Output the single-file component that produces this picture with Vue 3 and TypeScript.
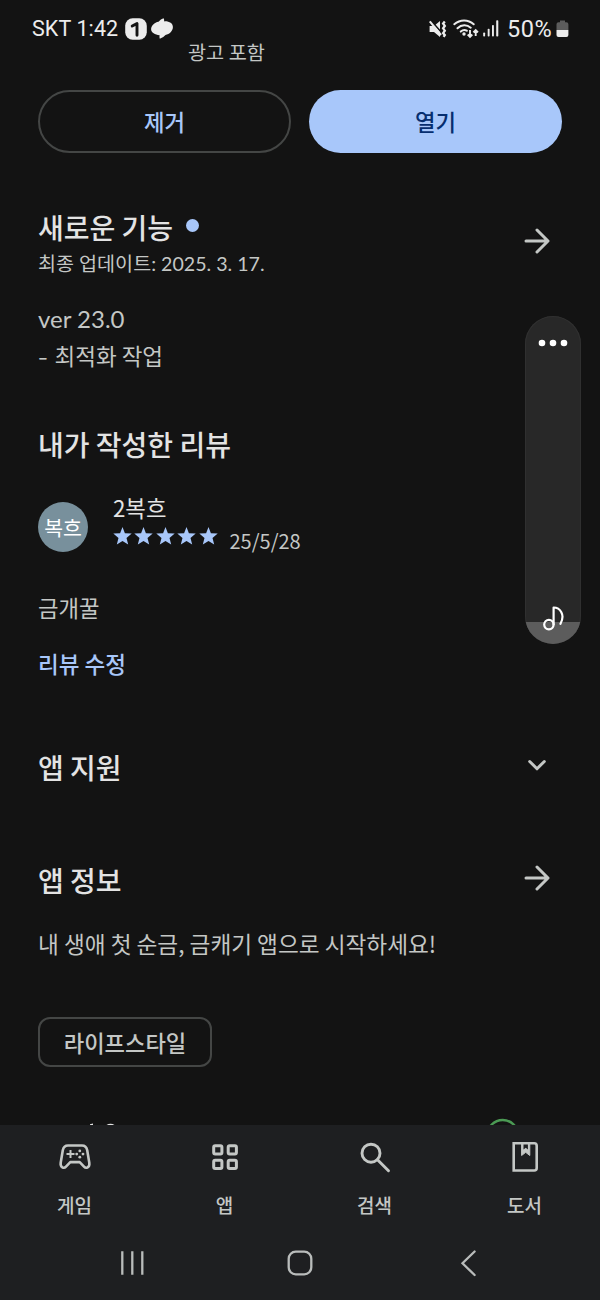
<script setup lang="ts">
const tabs: { id: string; label: string }[] = [
  { id: 'games', label: '게임' },
  { id: 'apps', label: '앱' },
  { id: 'search', label: '검색' },
  { id: 'books', label: '도서' },
]
const stars: number[] = [1, 2, 3, 4, 5]
</script>

<template>
  <div class="phone">
    <header class="status">
      <span class="carrier">SKT 1:42</span>
      <svg class="badge" width="22" height="22" viewBox="0 0 22 22">
        <rect x="0.2" y="0.2" width="21.6" height="21.6" rx="7.5" fill="#ececec" />
        <path d="M7.200 8 L12 5.600 V17.200" fill="none" stroke="#131313" stroke-width="2.900" stroke-linejoin="round" stroke-linecap="round" />
      </svg>
      <svg class="swirl" width="22" height="21" viewBox="0 0 22 21">
        <path d="M12.500 .2 C13.300 1.300 13.300 2.400 13 3.400 C18 3 21.900 5.300 21.900 9 C21.900 13 18.500 16.200 14.500 17 Q12 20 8.800 20.700 Q8.200 18.800 8.600 17.200 C4 16.900 .1 14.700 .1 11.300 C.1 7.500 3.500 4.400 7.500 3.700 Q9.800 .9 12.500 .2Z" fill="#ececec" />
      </svg>
      <span class="spacer"></span>
      <svg class="mute" width="18" height="18" viewBox="0 0 18 18">
        <path d="M.6 6h4.400l6-5v16l-6-5H.6z" fill="#ececec" />
        <path d="M1.800 .4 L13 13" stroke="#131313" stroke-width="1.700" />
        <path d="M.8 1.400 L12 15" stroke="#ececec" stroke-width="2" />
        <path d="M15.800 1.500l-1.700 2 1.700 2.400-1.700 2.400 1.700 2.400-1.700 2.400 1.700 2-1.200 1.800" fill="none" stroke="#ececec" stroke-width="2.300" />
      </svg>
      <svg class="wifi" width="26" height="20" viewBox="0 0 26 20" fill="none" stroke="#ececec">
        <path d="M1.300 5.200 C7 .1 15.200 .1 20.700 5.200 M4.500 9.200 C8.500 5.400 14 5.400 17.700 8.700 M7.800 12.600 C9.800 10.800 12 10.700 13.800 11.700" stroke-width="2" stroke-linecap="round" />
        <circle cx="11" cy="15" r="1.700" fill="#ececec" stroke="none" />
        <path d="M17 11v7M14.700 15.500l2.300 2.300 2.300-2.300M22.700 17v-6M20.400 13.300l2.300-2.300 2.300 2.300" stroke-width="1.900" />
      </svg>
      <svg class="signal" width="16" height="17" viewBox="0 0 16 17" fill="#ececec">
        <rect x="0.2" y="12.500" width="1.900" height="4" rx=".8" />
        <rect x="4.700" y="8.700" width="1.900" height="7.800" rx=".8" />
        <rect x="9" y="5" width="1.900" height="11.500" rx=".8" />
        <rect x="13.200" y="0.300" width="2.100" height="16.200" rx=".8" />
      </svg>
      <span class="percent">50%</span>
      <svg class="battery" width="13" height="18" viewBox="0 0 13 18">
        <path d="M4 .5h5v1.700h1.400a2 2 0 0 1 2 2V10H.5V4.200a2 2 0 0 1 2-2H4z" fill="#5c5c5c" />
        <path d="M.5 10h11.900v5.100a2 2 0 0 1-2 2H2.500a2 2 0 0 1-2-2z" fill="#ececec" />
      </svg>
    </header>

    <main class="content">
      <p class="ads">광고 포함</p>
      <div class="buttons">
        <button class="btn outline"><span>제거</span></button>
        <button class="btn filled"><span>열기</span></button>
      </div>

      <section class="news">
        <div class="row">
          <div>
            <h2 class="with-dot">새로운 기능<i class="dot"></i></h2>
            <p class="updated">최종 업데이트: 2025. 3. 17.</p>
          </div>
          <svg class="arrow" width="26" height="26" viewBox="0 0 26 26"><path d="M2 13H23.500M13 2l11 11-11 11" /></svg>
        </div>
        <p class="version">ver 23.0</p>
        <p class="body notes"><span class="dash">-</span>최적화 작업</p>
      </section>

      <section class="review">
        <h2>내가 작성한 리뷰</h2>
        <div class="reviewer">
          <div class="avatar"><span>복흐</span></div>
          <div>
            <p class="name">2복흐</p>
            <div class="rating">
              <svg v-for="s in stars" :key="s" width="19" height="18" viewBox="0 0 19 18">
                <path d="M9.500 .1 L11.900 6.200 L18.700 6.600 L13.500 11 L15.200 17.600 L9.500 14 L3.800 17.600 L5.500 11 L.3 6.600 L7.100 6.200Z" fill="#a8c7fa" />
              </svg>
              <span class="date">25/5/28</span>
            </div>
          </div>
        </div>
        <p class="body comment">금개꿀</p>
        <a class="edit">리뷰 수정</a>
      </section>

      <section class="row support">
        <h2>앱 지원</h2>
        <svg class="arrow" width="26" height="26" viewBox="0 0 26 26"><path d="M5.700 9.500l7.300 7.300 7.300-7.300" /></svg>
      </section>

      <section class="row about">
        <h2>앱 정보</h2>
        <svg class="arrow" width="26" height="26" viewBox="0 0 26 26"><path d="M2 13H23.500M13 2l11 11-11 11" /></svg>
      </section>
      <p class="body summary">내 생애 첫 순금, 금캐기 앱으로 시작하세요!</p>
      <span class="chip">라이프스타일</span>

      <div class="peek">
        <svg width="524" height="7" viewBox="0 0 524 7">
          <path d="M52 7v-.7l3-.8v1.500zM68.500 7q4-2.600 8 0z" fill="#e3e3e3" />
          <circle cx="464.700" cy="17.500" r="15.500" fill="none" stroke="#4b9a54" stroke-width="2.400" />
        </svg>
      </div>
    </main>

    <footer class="bottom">
      <nav class="tabs">
        <div v-for="t in tabs" :key="t.id" class="tab">
          <svg v-if="t.id === 'games'" width="36" height="36" viewBox="0 0 36 36" fill="none" stroke="#c4c7c5">
            <path d="M11 6.500H25C28 6.500 29.600 8.300 30.200 11.300L32.300 23.800C33 28.600 29 29.800 27 27.600L22.700 23.100H13.300L9 27.600C7 29.800 3 28.600 3.700 23.800L5.800 11.300C6.400 8.300 8 6.500 11 6.500Z" stroke-width="2.600" stroke-linejoin="round" />
            <path d="M13.500 11v8M9.500 15h8" stroke-width="2" />
            <g fill="#c4c7c5" stroke="none"><circle cx="22.800" cy="11.900" r="1.400" /><circle cx="22.800" cy="18.200" r="1.400" /><circle cx="19.700" cy="15.100" r="1.400" /><circle cx="26" cy="15.100" r="1.400" /></g>
          </svg>
          <svg v-else-if="t.id === 'apps'" width="36" height="36" viewBox="0 0 36 36" fill="none" stroke="#c4c7c5" stroke-width="3">
            <rect x="6.700" y="6.700" width="8.200" height="8.200" rx="1.500" /><rect x="21.200" y="6.700" width="8.200" height="8.200" rx="1.500" />
            <rect x="6.700" y="21.200" width="8.200" height="8.200" rx="1.500" /><rect x="21.200" y="21.200" width="8.200" height="8.200" rx="1.500" />
          </svg>
          <svg v-else-if="t.id === 'search'" width="36" height="36" viewBox="0 0 36 36" fill="none" stroke="#c4c7c5" stroke-width="2.900">
            <circle cx="14" cy="14.200" r="9" /><path d="M20.500 20.700L31.500 31.800" stroke-linecap="round" />
          </svg>
          <svg v-else width="36" height="36" viewBox="0 0 36 36" fill="none" stroke="#c4c7c5" stroke-width="2.600">
            <path d="M6.700 4.200H27.200Q29.700 4.200 29.700 6.700V29Q29.700 31.500 27.200 31.500H6.700Z" />
            <path d="M14.600 4V16.500L18.700 13.300L22.800 16.500V4" fill="#c4c7c5" stroke-width="1" />
            <path d="M16.500 5.500h4.400v5l-2.200-1.800-2.200 1.800z" fill="#1e1f21" stroke="none" />
          </svg>
          <span>{{ t.label }}</span>
        </div>
      </nav>
      <div class="system">
        <svg width="28" height="28" viewBox="0 0 28 28"><path d="M4.300 2.300v23.400M14.300 2.300v23.400M24.300 2.300v23.400" /></svg>
        <svg width="28" height="28" viewBox="0 0 28 28"><rect x="2.700" y="2.700" width="22.600" height="22.600" rx="7" /></svg>
        <svg width="28" height="28" viewBox="0 0 28 28"><path d="M20.600 2.500L8.500 14.300L20.600 26" stroke-linecap="round" /></svg>
      </div>
    </footer>

    <aside class="volume">
      <svg class="more" width="30" height="8" viewBox="0 0 30 8" fill="#fff"><circle cx="4" cy="4" r="3.300" /><circle cx="15" cy="4" r="3.300" /><circle cx="26" cy="4" r="3.300" /></svg>
      <div class="level">
        <svg class="note" width="22" height="26" viewBox="0 0 22 26" fill="none" stroke="#fff" stroke-width="2.200">
          <circle cx="6.900" cy="19.600" r="4.700" /><path d="M11.600 19.500V2.500C18 2.500 23.500 9.500 18.500 18.800" stroke-linecap="round" stroke-linejoin="round" />
        </svg>
      </div>
    </aside>
  </div>
</template>

<style>
body { margin: 0; background: #131313; }
</style>

<style scoped>
* { box-sizing: border-box; }
.phone {
  position: relative;
  display: flex;
  flex-direction: column;
  width: 600px;
  height: 1300px;
  overflow: hidden;
  background: #131313;
  color: #c4c7c5;
  font-family: "Noto Sans CJK KR", sans-serif;
}
svg { display: block; flex: none; }
h2, p { margin: 0; white-space: nowrap; }
h2 { font-size: 28px; line-height: 36px; font-weight: 500; color: #e3e3e3; }
.status {
  display: flex;
  align-items: center;
  height: 40px;
  padding: 17px 31px 0 32px;
  color: #ececec;
  font-family: Roboto, sans-serif;
  font-size: 21.500px;
  line-height: 24px;
}
.carrier { width: 93px; letter-spacing: 0.100px; white-space: nowrap; }
.swirl { margin-left: 4px; }
.spacer { flex: 1; }
.mute { margin-right: 6px; }
.wifi { margin-right: 4px; }
.signal { margin-right: 8px; }
.percent { width: 49px; font-size: 23.500px; letter-spacing: 0.500px; }
.content { flex: none; height: 1085px; padding: 0 38px; }
.ads { margin-left: 150px; font-size: 19.700px; line-height: 24px; }
.buttons { display: flex; gap: 18px; margin-top: 26px; }
.btn {
  width: 253px;
  height: 63px;
  padding: 0 0 1px;
  border: 2px solid #444645;
  border-radius: 32px;
  background: transparent;
  color: #a8c7fa;
  font: 500 22.300px "Noto Sans CJK KR", sans-serif;
}
.btn.filled { border: 0; background: #a8c7fa; color: #062e6f; }
.news { margin-top: 56px; }
.row { display: flex; align-items: center; justify-content: space-between; padding-right: 12px; }
.arrow { margin-top: -5px; fill: none; stroke: #c4c7c5; stroke-width: 3; stroke-linecap: round; stroke-linejoin: round; }
.with-dot { display: flex; align-items: center; }
.dot { width: 13px; height: 13px; margin: -4px 0 0 12.500px; border-radius: 50%; background: #a8c7fa; }
.updated { margin-top: 6px; font-family: Lato, "Noto Sans CJK KR", sans-serif; font-size: 19.600px; line-height: 26px; }
.version { margin-top: 26px; font-family: Lato, "Noto Sans CJK KR", sans-serif; font-size: 24px; line-height: 32px; }
.body { font-size: 22.500px; line-height: 32px; }
.notes { display: flex; margin-top: 4px; }
.dash { display: inline-block; width: 16.500px; transform: scaleX(1.250); transform-origin: left; }
.review { margin-top: 55px; }
.reviewer { display: flex; gap: 25px; margin-top: 30px; }
.avatar {
  display: grid;
  place-items: center;
  width: 50px;
  height: 50px;
  margin-top: 10px;
  border-radius: 50%;
  background: #78909c;
  color: #fff;
  font-size: 20.500px;
  line-height: 24px;
}
.avatar span { margin-top: -1px; }
.name { font-size: 22.300px; line-height: 30px; color: #e3e3e3; }
.rating { display: flex; gap: 2.500px; height: 32px; margin-left: -0.500px; }
.rating svg { margin-top: 5px; }
.date { margin: 9px 0 0 9.500px; font-size: 20px; line-height: 20px; }
.comment { margin-top: 37px; font-size: 22.300px; }
.edit { display: block; margin-top: 24px; color: #a8c7fa; font-size: 22.500px; line-height: 32px; font-weight: 500; }
.support { margin-top: 70px; }
.about { margin-top: 77px; }
.summary { margin-top: 30px; font-size: 22.650px; }
.chip {
  display: flex;
  align-items: center;
  justify-content: center;
  width: 174px;
  height: 50px;
  margin-top: 57px;
  border: 2px solid #444645;
  border-radius: 12px;
  font-size: 22.200px;
  font-weight: 500;
}
.peek { margin-top: 51px; }
.bottom { flex: none; height: 175px; background: #1e1f21; }
.tabs { display: flex; height: 102px; padding-top: 14px; }
.tab { display: flex; flex: 1; flex-direction: column; align-items: center; font-size: 19px; line-height: 24px; font-weight: 500; }
.tab span { margin: 18px 1px 0 0; }
.system { display: flex; justify-content: space-between; padding: 22px 118px 0; }
.system svg { fill: none; stroke: #b9bcbb; stroke-width: 2.300; }
.volume {
  position: absolute;
  top: 316px;
  left: 525px;
  display: flex;
  flex-direction: column;
  justify-content: space-between;
  align-items: center;
  width: 56px;
  height: 328px;
  padding-top: 23px;
  overflow: hidden;
  border-radius: 28px;
  background: #282828;
  box-shadow: inset 0 0 0 1px #303030;
}
.level { display: flex; justify-content: center; width: 56px; height: 22px; background: #5c5c5c; }
.note { margin-top: -17px; }
</style>
